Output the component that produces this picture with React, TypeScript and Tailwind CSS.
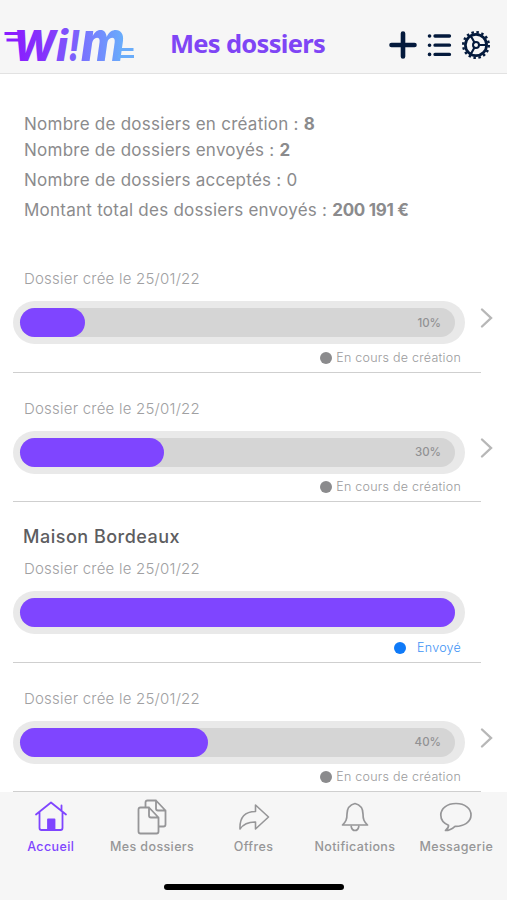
import type { ReactNode } from "react";

type Dossier = {
    title?: string;
    date: string;
    progress: number;
    width: number;
    sent?: boolean;
};

const dossiers: Dossier[] = [
    { date: "25/01/22", progress: 10, width: 65 },
    { date: "25/01/22", progress: 30, width: 144 },
    { title: "Maison Bordeaux", date: "25/01/22", progress: 100, width: 435, sent: true },
    { date: "25/01/22", progress: 40, width: 188 },
];

function Logo() {
    return (
        <svg width="134" height="40" viewBox="0 0 134 40" className="shrink-0 overflow-visible" fontFamily="Inter, sans-serif" fontWeight="800" fontStyle="italic">
            <defs>
                <linearGradient id="w" x1="0" x2="1">
                    <stop offset="0" stopColor="#8a1cff" />
                    <stop offset="1" stopColor="#8240fb" />
                </linearGradient>
                <linearGradient id="m" x1="0" x2="1">
                    <stop offset="0" stopColor="#7a70ff" />
                    <stop offset="1" stopColor="#68b0fb" />
                </linearGradient>
            </defs>
            <path d="M4.5 8.5H22M6.5 15H20" stroke="#8a1cff" strokeWidth="3" />
            <text x="13" y="35.5" fontSize="42" textLength="43" lengthAdjust="spacingAndGlyphs" fill="url(#w)">W</text>
            <text x="56" y="35.5" fontSize="42" textLength="12" lengthAdjust="spacingAndGlyphs" fill="#7f50fc">i</text>
            <text x="68" y="35.5" fontSize="42" textLength="12" lengthAdjust="spacingAndGlyphs" fill="#7c60fc">!</text>
            <g transform="translate(81 35.5) scale(1 1.33)">
                <text fontSize="42" textLength="44" lengthAdjust="spacingAndGlyphs" fill="url(#m)">m</text>
            </g>
            <path d="M120 24.5H133.5M118 31.5H134" stroke="#69acfa" strokeWidth="3" />
        </svg>
    );
}

function HeaderIcons() {
    return (
        <svg width="104" height="32" viewBox="0 0 104 32" fill="none" stroke="#041a3c" strokeLinecap="round">
            <path d="M3.5 16H26.5M15 4.5V27.5" strokeWidth="4.6" />
            <path d="M47 7H61.5M47 16.2H61.5M47 25.4H61.5" strokeWidth="3.3" />
            <path d="M41.5 7H41.6M41.5 16.2H41.6M41.5 25.4H41.6" strokeWidth="3.6" />
            <circle cx="88" cy="16" r="10.6" strokeWidth="2.7" />
            <circle cx="88" cy="16" r="12.8" strokeWidth="2.4" strokeLinecap="butt" strokeDasharray="2.5 2.527" />
            <circle cx="88" cy="16" r="3" strokeWidth="2" />
            <path d="M91 16H98M86.5 13.4L82.7 6.8M86.5 18.6L82.7 25.2" strokeWidth="2.1" />
        </svg>
    );
}

function DossierRow({ title, date, progress, width, sent }: Dossier) {
    return (
        <li className="flex shrink-0 flex-col pl-[13px]">
            {title && <h2 className="-mb-4 flex h-[47px] items-end pl-[10px] text-[18px] font-medium leading-6 tracking-[0.5px] text-[#5d5d5f]">{title}</h2>}
            <p className="mt-6 pl-[11px] text-[15px] font-light leading-6 tracking-[0.22px] text-[#a0a0a2]">Dossier crée le {date}</p>
            <div className="mt-[10px] flex items-center gap-[15px]">
                <div className="flex h-[43px] w-[452px] items-center rounded-full bg-[#e9e9e9] pl-[7px]">
                    <div className="flex h-[29px] w-[435px] items-center rounded-full bg-[#d5d5d5]">
                        <div className="h-full rounded-full bg-[#7f45ff]" style={{ width }} />
                        {!sent && <span className="ml-auto pr-[14px] pt-[2px] text-[11.5px] font-medium text-[#919193]">{progress}%</span>}
                    </div>
                </div>
                {!sent && (
                    <svg width="14" height="22" viewBox="0 0 14 22" className="-mt-[9px]" fill="none" stroke="#b7b7b7" strokeWidth="2.4" strokeLinecap="round">
                        <path d="M2 2.5L11 11L2 19.5" />
                    </svg>
                )}
            </div>
            <div className="flex h-[28.5px] w-[468px] items-center justify-end border-b border-[#cfcfcf] pr-[20px] text-[12.5px] font-light tracking-[0.25px]">
                <span className={sent ? "mr-[11px] size-3 rounded-full bg-[#0f7af8]" : "mr-[4px] size-3 rounded-full bg-[#8b8b8d]"} />
                <span className={sent ? "pt-px text-[#3c92f5]" : "pt-px text-[#9a9a9c]"}>{sent ? "Envoyé" : "En cours de création"}</span>
            </div>
        </li>
    );
}

function Tab({ label, active, children }: { label: string; active?: boolean; children: ReactNode }) {
    return (
        <button className={active ? "flex flex-1 flex-col items-center text-[#7f45ff]" : "flex flex-1 flex-col items-center text-[#969698]"}>
            <svg width="36" height="36" viewBox="0 0 36 36" fill="none" stroke="currentColor" strokeWidth="1.8" strokeLinecap="round" strokeLinejoin="round">
                {children}
            </svg>
            <span className="mt-[2px] whitespace-nowrap text-[12.5px] font-medium leading-5 tracking-[0.38px]">{label}</span>
        </button>
    );
}

export default function App() {
    return (
        <div className="flex h-[900px] w-[507px] flex-col overflow-hidden bg-white font-[Inter,sans-serif]">
            <header className="flex h-[74px] shrink-0 items-center border-b border-[#e2e2e2] bg-[#f6f6f6] pt-4">
                <Logo />
                <h1 className="-mt-[4px] ml-9 w-[155px] whitespace-nowrap font-['Noto_Sans',sans-serif] text-[25.5px] font-bold leading-8 tracking-[-0.7px] text-[#7f45f5]">Mes dossiers</h1>
                <div className="ml-auto mr-[15px]">
                    <HeaderIcons />
                </div>
            </header>

            <main className="flex min-h-0 flex-1 flex-col overflow-hidden">
                <section className="flex shrink-0 flex-col pl-6 pt-[38px] text-[17px] leading-6 tracking-[0.25px] text-[#8b8b8d]">
                    <p>Nombre de dossiers en création : <b>8</b></p>
                    <p className="mt-[2px]">Nombre de dossiers envoyés : <b>2</b></p>
                    <p className="mt-[6px]">Nombre de dossiers acceptés : 0</p>
                    <p className="mt-[6px]">Montant total des dossiers envoyés : <b className="tracking-[-0.3px]">200 191 €</b></p>
                </section>
                <ul className="mt-[21px] flex flex-col">
                    {dossiers.map((dossier, i) => (
                        <DossierRow key={i} {...dossier} />
                    ))}
                </ul>
            </main>

            <nav className="flex h-[108px] shrink-0 flex-col bg-[#f6f6f6] pt-[7px]">
                <div className="flex">
                    <Tab label="Accueil" active>
                        <path d="M3 15.5L18 3.5L33 15.5M6.5 13V29Q6.5 31 8.5 31H27.5Q29.5 31 29.5 29V13M28.5 12V6.5" />
                        <path d="M15 31V20.5H21.5V31Z" fill="currentColor" />
                    </Tab>
                    <Tab label="Mes dossiers">
                        <path d="M4.5 10.5Q4.5 8.5 6.5 8.5H15L24.5 18.5V32.5Q24.5 34.5 22.5 34.5H6.5Q4.5 34.5 4.5 32.5ZM15 8.5V16.5Q15 18.5 17 18.5H24.5" />
                        <path d="M11.5 8V3.5Q11.5 1.5 13.5 1.5H22L31.5 11.5V25.5Q31.5 27.5 29.5 27.5H25M22 1.5V9.5Q22 11.5 24 11.5H31.5" />
                    </Tab>
                    <Tab label="Offres">
                        <path d="M19.5 6L32.5 18L19.5 30V23C12 22.8 7.5 25 4 30C3.5 18 9 12.5 19.5 12.5Z" strokeWidth="1.6" />
                    </Tab>
                    <Tab label="Notifications">
                        <path d="M18 4.5C12 6 10 10 10 15C10 20.5 9 22.5 5.5 26H30.5C27 22.5 26 20.5 26 15C26 10 24 6 18 4.5ZM14.2 27.5Q15 31.5 18 31.5Q21 31.5 21.8 27.5" strokeWidth="1.7" />
                    </Tab>
                    <Tab label="Messagerie">
                        <path d="M10.5 26.2C5 24 2.8 20 2.8 16C2.8 9.5 9 4.5 18 4.5S33 9.5 33 16C33 23 26 27.5 17 27.3C14 30 11 31.5 7.5 31.5C9.5 30 10.8 28.2 10.5 26.2Z" strokeWidth="1.7" />
                    </Tab>
                </div>
                <div className="ml-[164px] mt-[26.5px] h-[6px] w-[180px] rounded-full bg-black" />
            </nav>
        </div>
    );
}
